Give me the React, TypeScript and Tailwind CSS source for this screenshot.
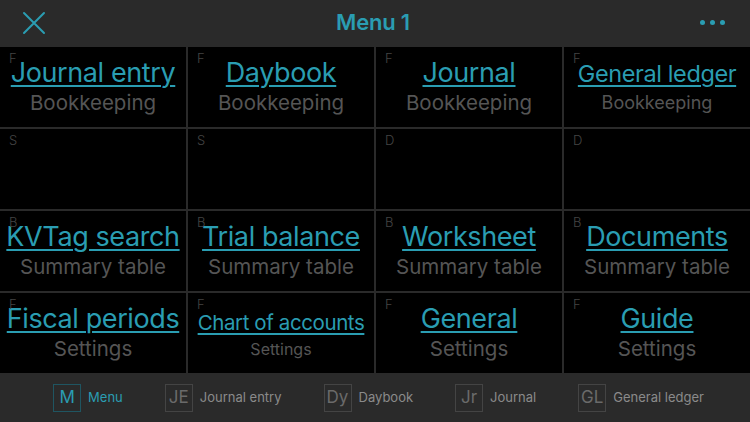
import React from 'react'

type Cell = {
  tag: string
  title?: string
  sub?: string
  titleSize?: string
  subSize?: string
}

const cells: Cell[] = [
  { tag: 'F', title: 'Journal entry', sub: 'Bookkeeping' },
  { tag: 'F', title: 'Daybook', sub: 'Bookkeeping' },
  { tag: 'F', title: 'Journal', sub: 'Bookkeeping' },
  { tag: 'F', title: 'General ledger', sub: 'Bookkeeping', titleSize: 'text-[23.5px]', subSize: 'text-[18px] leading-[26px]' },
  { tag: 'S' },
  { tag: 'S' },
  { tag: 'D' },
  { tag: 'D' },
  { tag: 'B', title: 'KVTag search', sub: 'Summary table' },
  { tag: 'B', title: 'Trial balance', sub: 'Summary table' },
  { tag: 'B', title: 'Worksheet', sub: 'Summary table' },
  { tag: 'B', title: 'Documents', sub: 'Summary table' },
  { tag: 'F', title: 'Fiscal periods', sub: 'Settings' },
  { tag: 'F', title: 'Chart of accounts', sub: 'Settings', titleSize: 'text-[20.5px]', subSize: 'text-[16px] leading-[20px]' },
  { tag: 'F', title: 'General', sub: 'Settings' },
  { tag: 'F', title: 'Guide', sub: 'Settings' },
]

const tabs = [
  { abbr: 'M', label: 'Menu', active: true },
  { abbr: 'JE', label: 'Journal entry' },
  { abbr: 'Dy', label: 'Daybook' },
  { abbr: 'Jr', label: 'Journal' },
  { abbr: 'GL', label: 'General ledger' },
]

export default function App() {
  return (
    <div
      className="w-[750px] h-[422px] flex flex-col bg-black overflow-hidden"
      style={{ fontFamily: 'Inter, "Noto Sans", sans-serif' }}
    >
      {/* Header */}
      <div className="h-[45px] bg-[#2a2a2a] flex items-center justify-between px-[22px] shrink-0">
        <svg width="24" height="24" viewBox="0 0 24 24" className="text-[#2a9db2]">
          <path d="M2 2 L22 22 M22 2 L2 22" stroke="currentColor" strokeWidth="2" strokeLinecap="round" />
        </svg>
        <div className="text-[22px] font-semibold text-[#2a9db2] tracking-[-0.2px]">Menu 1</div>
        <div className="flex gap-[5px] pr-[3px]">
          <span className="w-[5px] h-[5px] rounded-full bg-[#2a9db2]" />
          <span className="w-[5px] h-[5px] rounded-full bg-[#2a9db2]" />
          <span className="w-[5px] h-[5px] rounded-full bg-[#2a9db2]" />
        </div>
      </div>

      {/* Grid */}
      <div className="grid grid-cols-4 grid-rows-4 gap-[2px] bg-[#2a2a2a] pt-[2px] flex-1">
        {cells.map((c, i) => (
          <div key={i} className="relative bg-black flex flex-col items-center justify-center">
            <span className="absolute left-[9px] top-[2px] text-[13px] font-light text-[#444]">{c.tag}</span>
            {c.title && (
              <>
                <span
                  className={`${c.titleSize ?? 'text-[27px]'} leading-[32px] text-[#2a9db2] underline underline-offset-[3px] decoration-[2px] tracking-[-0.4px] whitespace-nowrap`}
                >
                  {c.title}
                </span>
                <span className={`${c.subSize ?? 'text-[20.5px] leading-[28px]'} text-[#555] whitespace-nowrap`}>
                  {c.sub}
                </span>
              </>
            )}
          </div>
        ))}
      </div>

      {/* Bottom bar */}
      <div className="h-[49px] bg-[#2a2a2a] flex items-center justify-center gap-[42px] shrink-0 pl-[7px]">
        {tabs.map((t) => (
          <div key={t.abbr} className="flex items-center gap-[7px]">
            <span
              className={`w-[28px] h-[28px] border flex items-center justify-center text-[17px] ${
                t.active ? 'border-[#1f5561] text-[#2a9db2]' : 'border-[#444] text-[#6a6a6a]'
              }`}
            >
              {t.abbr}
            </span>
            <span className={`text-[13px] ${t.active ? 'text-[#2a9db2]' : 'text-[#8a8a8a]'}`}>{t.label}</span>
          </div>
        ))}
      </div>
    </div>
  )
}
